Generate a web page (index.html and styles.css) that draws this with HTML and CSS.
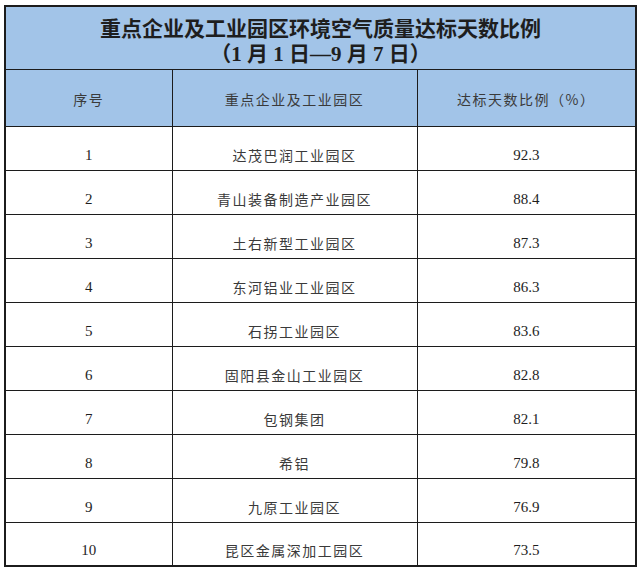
FILE: index.html
```html
<!DOCTYPE html>
<html lang="zh">
<head>
<meta charset="utf-8">
<title>重点企业及工业园区环境空气质量达标天数比例</title>
<link rel="stylesheet" href="styles.css">
</head>
<body>
<div class="page">
  <table class="stats">
    <colgroup>
      <col class="c-no">
      <col class="c-name">
      <col class="c-rate">
    </colgroup>
    <thead>
      <tr class="title-row">
        <th colspan="3" class="title">重点企业及工业园区环境空气质量达标天数比例<br>（1 月 1 日—9 月 7 日）</th>
      </tr>
      <tr class="head-row">
        <th>序号</th>
        <th>重点企业及工业园区</th>
        <th>达标天数比例（%）</th>
      </tr>
    </thead>
    <tbody>
      <tr><td class="num">1</td><td class="name">达茂巴润工业园区</td><td class="num">92.3</td></tr>
      <tr><td class="num">2</td><td class="name">青山装备制造产业园区</td><td class="num">88.4</td></tr>
      <tr><td class="num">3</td><td class="name">土右新型工业园区</td><td class="num">87.3</td></tr>
      <tr><td class="num">4</td><td class="name">东河铝业工业园区</td><td class="num">86.3</td></tr>
      <tr><td class="num">5</td><td class="name">石拐工业园区</td><td class="num">83.6</td></tr>
      <tr><td class="num">6</td><td class="name">固阳县金山工业园区</td><td class="num">82.8</td></tr>
      <tr><td class="num">7</td><td class="name">包钢集团</td><td class="num">82.1</td></tr>
      <tr><td class="num">8</td><td class="name">希铝</td><td class="num">79.8</td></tr>
      <tr><td class="num">9</td><td class="name">九原工业园区</td><td class="num">76.9</td></tr>
      <tr><td class="num">10</td><td class="name">昆区金属深加工园区</td><td class="num">73.5</td></tr>
    </tbody>
  </table>
</div>
</body>
</html>
```
FILE: styles.css
```css
html, body {
  margin: 0;
  padding: 0;
  background: #ffffff;
}

.page {
  padding: 5px 0 0 4px;
}

.stats {
  border-collapse: collapse;
  table-layout: fixed;
  width: 631px;
  border: 2px solid #1c1c1c;
  font-family: "Liberation Serif", "Noto Sans CJK SC", serif;
  color: #262626;
}

.c-no { width: 167px; }
.c-name { width: 245px; }
.c-rate { width: 219px; }

.stats th,
.stats td {
  border: 1px solid #1c1c1c;
  padding: 0;
  text-align: center;
}

.title-row th {
  height: 63px;
  background: #a2c4e8;
  vertical-align: top;
  padding-top: 10px;
  box-sizing: border-box;
  font-family: "Liberation Serif", "Noto Sans CJK SC", serif;
  font-weight: bold;
  font-size: 21px;
  line-height: 25px;
  color: #1e1e1e;
}

.head-row th {
  height: 57px;
  background: #a2c4e8;
  font-family: "Noto Sans CJK SC", sans-serif;
  font-weight: normal;
  font-size: 14px;
  letter-spacing: 1.5px;
  color: #3a3a3a;
  vertical-align: middle;
  padding-top: 3px;
  box-sizing: border-box;
}

.stats tbody td {
  height: 44px;
  vertical-align: bottom;
  padding-bottom: 5px;
  box-sizing: border-box;
  line-height: 20px;
}

.stats td.num {
  font-family: "Liberation Serif", serif;
  font-size: 15px;
  color: #1e1e1e;
}

.stats td.name {
  font-family: "Noto Sans CJK SC", sans-serif;
  font-size: 14px;
  letter-spacing: 1.5px;
  color: #3a3a3a;
}
```
